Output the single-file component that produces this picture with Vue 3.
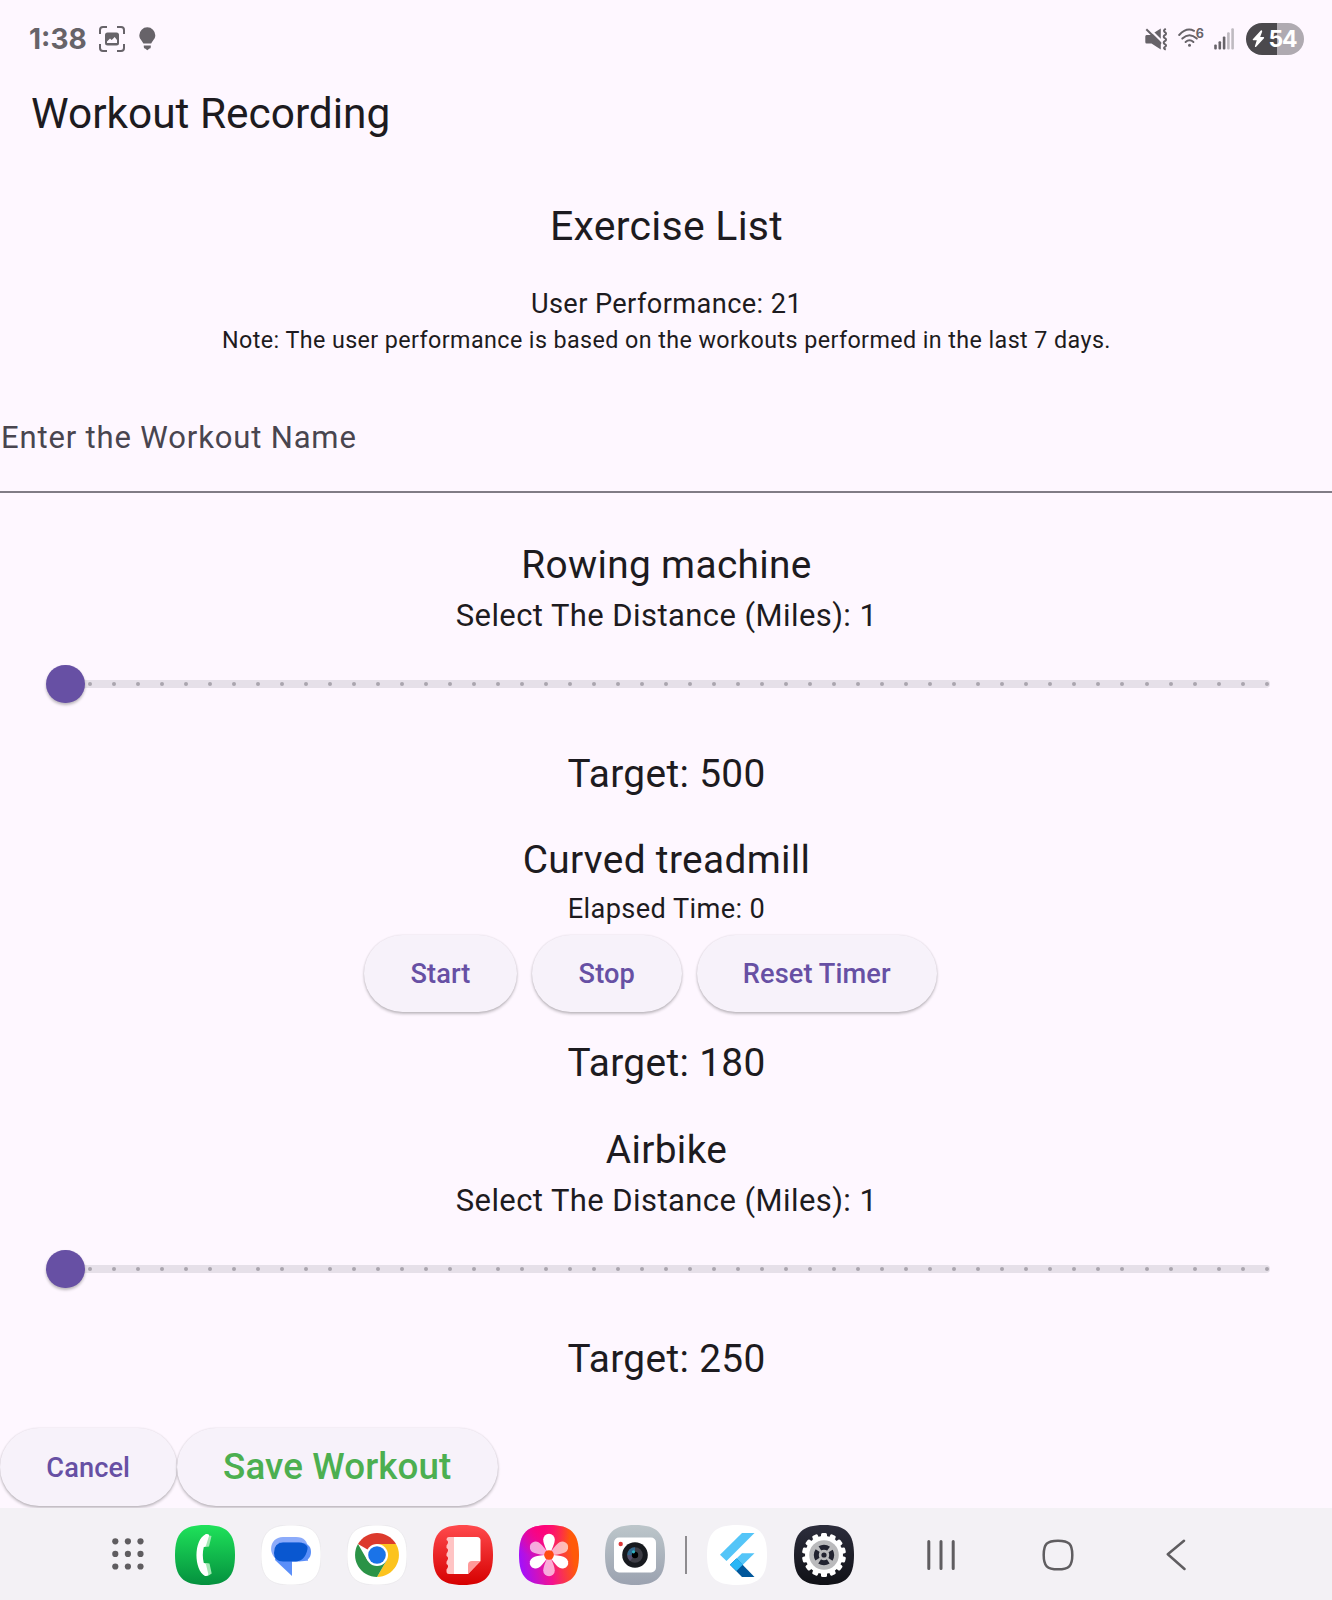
<script setup>
const ticks = Array.from({ length: 50 }, (_, i) => 24.02 * (i + 1) + 23.6)
const petals = [0, 60, 120, 180, 240, 300]
const teeth = Array.from({ length: 14 }, (_, i) => (i * 360) / 14)
const squircle = 'M30 0C52 0 60 8 60 30S52 60 30 60 0 52 0 30 8 0 30 0Z'
</script>

<template>
  <div class="screen">
    <header class="status">
      <span class="clock">1:38</span>
      <svg class="capture" width="26" height="26" viewBox="0 0 26 26">
        <path d="M1 8V4Q1 1 4 1H8M18 1H22Q25 1 25 4V8M25 18V22Q25 25 22 25H18M8 25H4Q1 25 1 22V18" fill="none" stroke="#676369" stroke-width="2" />
        <rect x="6" y="6.5" width="14" height="13" rx="2.5" fill="#676369" />
        <path d="M8 17V15.5L11 12.5L12.7 14L15.7 11L18 14V17Z" fill="#fef7ff" />
      </svg>
      <svg class="bulb" width="17" height="24" viewBox="0 0 17 24">
        <path d="M8.3 0.3A8 8 0 0 1 16.3 8.3C16.3 12 13.6 13.5 12.2 16.5H4.4C3 13.5 0.3 12 0.3 8.3A8 8 0 0 1 8.3 0.3Z" fill="#676369" />
        <path d="M4.8 18.6H11.8V20Q11.8 21.5 10.5 21.5L8.3 23.3L6.1 21.5Q4.8 21.5 4.8 20Z" fill="#676369" />
      </svg>
      <span class="grow"></span>
      <svg class="mute" width="23" height="23" viewBox="0 0 23 23">
        <path d="M1.5 7H5.5L15.8 .6V21.6L6.5 15.5H1.5Q.3 15.5 .3 14V8.5Q.3 7 1.5 7Z" fill="#676369" />
        <path d="M3.2 0L17.500 14" stroke="#fef7ff" stroke-width="2.4" />
        <path d="M1.3 1.3L16 15.8" stroke="#676369" stroke-width="2" />
        <path d="M20.8 .8Q17.800 2.500 19.800 4.200Q22.300 5.600 19.800 7.200Q17.600 8.700 19.800 10.200Q22.300 11.600 19.800 13.200Q17.600 14.700 19.800 16.200Q22.300 17.600 19.800 19Q18 20.300 20.800 21.600" fill="none" stroke="#676369" stroke-width="2" />
      </svg>
      <svg class="wifi" width="26" height="25" viewBox="0 -5 26 25">
        <g fill="none" stroke="#676369" stroke-width="2" stroke-linecap="round">
          <path d="M1.200 7Q8.500-1 16 2.800" />
          <path d="M4.300 10.600Q11.500 4 18.800 10.600" />
          <path d="M7.600 14Q11.500 10.400 15.400 14" />
        </g>
        <circle cx="11.500" cy="17.200" r="1.500" fill="#676369" />
        <text class="wifi-gen" x="17.700" y="10.300">6</text>
      </svg>
      <svg class="signal" width="21" height="22" viewBox="0 0 21 22">
        <g fill="#676369">
          <rect x=".2" y="16.6" width="2.6" height="5" rx="1" />
          <rect x="4.5" y="13.2" width="2.6" height="8.4" rx="1" />
          <rect x="8.8" y="8.6" width="2.6" height="13" rx="1" />
        </g>
        <g fill="#bfbac1">
          <rect x="13.1" y="4.2" width="2.6" height="17.4" rx="1" />
          <rect x="17.3" y=".3" width="2.6" height="21.3" rx="1" />
        </g>
      </svg>
      <div class="battery">
        <svg width="13" height="18" viewBox="0 0 13 18"><path d="M8.8 .5L.8 9.3Q.4 10.2 1.3 10.2H4.8L2.9 16.2Q3 17.5 4.2 16.8L12 8.2Q12.5 7.2 11.4 7.1H8.2L10.2 1.4Q10.1 0 8.8 .5Z" fill="#fff" /></svg>
        <span>54</span>
      </div>
    </header>

    <h1 class="title">Workout Recording</h1>

    <main>
      <h2 class="list-title">Exercise List</h2>
      <p class="performance">User Performance: 21</p>
      <p class="note">Note: The user performance is based on the workouts performed in the last 7 days.</p>
      <div class="field">Enter the Workout Name</div>

      <h3 class="exercise">Rowing machine</h3>
      <p class="select">Select The Distance (Miles): 1</p>
      <div class="slider">
        <div class="track"></div>
        <i v-for="t in ticks" :key="t" class="tick" :style="{ left: t + 'px' }"></i>
        <div class="thumb"></div>
      </div>
      <p class="target">Target: 500</p>

      <h3 class="exercise second">Curved treadmill</h3>
      <p class="elapsed">Elapsed Time: 0</p>
      <div class="timer">
        <button class="start">Start</button>
        <button class="stop">Stop</button>
        <button class="reset">Reset Timer</button>
      </div>
      <p class="target after-timer">Target: 180</p>

      <h3 class="exercise third">Airbike</h3>
      <p class="select">Select The Distance (Miles): 1</p>
      <div class="slider">
        <div class="track"></div>
        <i v-for="t in ticks" :key="t" class="tick" :style="{ left: t + 'px' }"></i>
        <div class="thumb"></div>
      </div>
      <p class="target">Target: 250</p>

      <div class="actions">
        <button class="cancel">Cancel</button>
        <button class="save">Save Workout</button>
      </div>
    </main>

    <nav class="taskbar">
      <svg class="apps" width="32" height="32" viewBox="0 0 32 32" fill="#5f5d60">
        <template v-for="r in 3" :key="r">
          <circle v-for="c in 3" :key="c" :cx="3.3 + (c - 1) * 12.6" :cy="3.3 + (r - 1) * 12.6" r="3.1" />
        </template>
      </svg>
      <div class="dock">
        <svg width="60" height="60" viewBox="0 0 60 60">
          <defs><linearGradient id="phone" x2="0" y2="1"><stop stop-color="#1fe25a" /><stop offset="1" stop-color="#04903e" /></linearGradient></defs>
          <path :d="squircle" fill="url(#phone)" />
          <path d="M30 9.500L36.500 11L34 21.500Q29 22.500 28.500 21ZM28.500 38.500Q31 37.500 34.500 38.500L36.700 48.500Q34 51 30 51Z" fill="#a3e8b4" />
          <path d="M31 9Q34.500 8.500 34 11L31 20.500Q30.300 22 28.800 22Q26.800 30 28.800 38Q30.500 37.800 31 39.500L33.300 49Q33.500 51.500 30 51C19 45 18 15 31 9Z" fill="#fff" />
        </svg>
        <svg width="60" height="60" viewBox="0 0 60 60">
          <path :d="squircle" fill="#fff" stroke="#e4e2e6" stroke-width=".6" />
          <path d="M22 12H35Q47 12 47 25V36H20C6 33 7 12 22 12Z" fill="#8cabfa" />
          <path d="M18 17.500H38Q50 17.500 50 27Q50 36.500 38 36.500H31V51L14 35Z" fill="#5b8ff9" />
          <path d="M22 17.500H38C42 17.500 45 19 46.500 22V24C45 33 39 36.500 35 36.500H22Q13 36.500 13 28Q13 17.500 22 17.500Z" fill="#0957d0" />
        </svg>
        <svg width="60" height="60" viewBox="0 0 60 60">
          <path :d="squircle" fill="#fff" stroke="#e4e2e6" stroke-width=".6" />
          <path d="M30 30L11 19A22 22 0 0 1 49 19Z" fill="#dc3a2d" />
          <path d="M49 19A22 22 0 0 1 30 52L39.500 35.500L30 19Z" fill="#fcc31e" />
          <path d="M11 19A22 22 0 0 0 30 52L39.500 35.500L30 30L20.500 35.500Z" fill="#2b9347" />
          <circle cx="30" cy="30" r="11" fill="#fff" /><circle cx="30" cy="30" r="8.800" fill="#1a73e8" />
        </svg>
        <svg width="60" height="60" viewBox="0 0 60 60">
          <defs><linearGradient id="notes" x2="0" y2="1"><stop stop-color="#ff4a4d" /><stop offset="1" stop-color="#d60000" /></linearGradient></defs>
          <path :d="squircle" fill="url(#notes)" />
          <path d="M22 12H16Q13.500 12 13.500 15Q16 16.500 14.500 19Q13 20 13.500 23Q16 24.500 14.500 27Q13 28.500 13.500 31Q16 32.500 14.500 35Q13 36.500 13.500 39Q16 40.500 14.500 43Q13 44 13.500 46.500Q13.500 49 16 49H22Z" fill="#ffc4c4" />
          <path d="M21 12H44Q47.500 12 47.500 15.500V36L35 49H21Z" fill="#fff" />
          <path d="M35 49V40Q35 36 39 36H47.500Z" fill="#ff9999" />
        </svg>
        <svg width="60" height="60" viewBox="0 0 60 60">
          <defs>
            <linearGradient id="gallery" x1="0" y1=".65" x2="1" y2=".45"><stop stop-color="#a010ff" /><stop offset=".48" stop-color="#f4128e" /><stop offset=".9" stop-color="#ff5a08" /></linearGradient>
            <radialGradient id="pink" cx=".35" cy="0" r=".55"><stop stop-color="#ff0078" /><stop offset="1" stop-color="#ff0078" stop-opacity="0" /></radialGradient>
          </defs>
          <path :d="squircle" fill="url(#gallery)" /><path :d="squircle" fill="url(#pink)" />
          <path v-for="(p, i) in petals" :key="p" d="M27.800 26Q24.200 18 24.200 14.500A5.800 5.800 0 0 1 35.800 14.500Q35.800 18 32.200 26Z" :transform="`rotate(${p} 30 30)`" fill="#fff" :opacity="i % 2 ? .65 : 1" />
          <circle cx="30" cy="30" r="4.800" fill="#ff4b12" />
        </svg>
        <svg width="60" height="60" viewBox="0 0 60 60">
          <defs><linearGradient id="camera" x2="0" y2="1"><stop stop-color="#bcc6ca" /><stop offset="1" stop-color="#9ba2b0" /></linearGradient></defs>
          <path :d="squircle" fill="url(#camera)" />
          <rect x="9" y="12.500" width="42" height="35" rx="5" fill="#fff" />
          <circle cx="15.700" cy="19" r="2.200" fill="#dc3838" />
          <circle cx="30" cy="30" r="12.800" fill="#171a1f" /><circle cx="30" cy="30" r="7.800" fill="#3d3d45" />
          <path d="M30 22.200A7.800 7.800 0 0 0 22.200 30L30 30Z" fill="#31688c" />
          <path d="M22.200 30A7.800 7.800 0 0 0 25 36L30 30Z" fill="#56506f" />
          <circle cx="30" cy="30" r="3.200" fill="#000" />
          <circle cx="28.500" cy="26.800" r="1.600" fill="#31b2c0" />
        </svg>
      </div>
      <i class="divider"></i>
      <div class="dock recent">
        <svg width="60" height="60" viewBox="0 0 60 60">
          <path :d="squircle" fill="#fff" />
          <path d="M35 8H47.500L19.500 36L13 29.700Z" fill="#54c5f8" />
          <path d="M35 28.300H47.500L29.500 46L23 39.800Z" fill="#54c5f8" />
          <path d="M35 52L23 39.800L29.500 33.500L47.500 52Z" fill="#01579b" />
          <path d="M23 39.800L29.500 33.500L35.800 39.800L29.500 46Z" fill="#29b6f6" />
        </svg>
        <svg width="60" height="60" viewBox="0 0 60 60">
          <defs><linearGradient id="gear" x2="0" y2="1"><stop stop-color="#2c2d3c" /><stop offset="1" stop-color="#101116" /></linearGradient></defs>
          <path :d="squircle" fill="url(#gear)" />
          <rect v-for="t in teeth" :key="t" x="27" y="8" width="6" height="10" rx="1.500" fill="#fff" :transform="`rotate(${t} 30 30)`" />
          <circle cx="30" cy="30" r="19" fill="#fff" /><circle cx="30" cy="30" r="14.800" fill="#bababc" />
          <circle cx="30" cy="30" r="7.700" fill="none" stroke="#222330" stroke-width="5" stroke-dasharray="9.100 2.995" stroke-dashoffset="4.550" />
          <circle cx="30" cy="30" r="5" fill="#bababc" /><circle cx="30" cy="30" r="2.600" fill="#222330" />
        </svg>
      </div>
      <svg class="recents" width="30" height="30" viewBox="0 0 30 30"><path d="M2.800 1.500V28.500M15 1.500V28.500M27.200 1.500V28.500" stroke="#5f5d60" stroke-width="3" stroke-linecap="round" /></svg>
      <svg class="home" width="32" height="32" viewBox="0 0 32 32"><path d="M16 1.700C27 1.700 30.300 5 30.300 16S27 30.300 16 30.300 1.700 27 1.700 16 5 1.700 16 1.700Z" fill="none" stroke="#5f5d60" stroke-width="2.500" /></svg>
      <svg class="back" width="20" height="32" viewBox="0 0 20 32"><path d="M18 1.800L1.800 15.300L18.500 30" fill="none" stroke="#5f5d60" stroke-width="2.500" stroke-linecap="round" stroke-linejoin="round" /></svg>
    </nav>
  </div>
</template>

<style>
body { margin: 0; background: #fef7ff; }
</style>

<style scoped>
.screen { width: 1332px; height: 1600px; display: flex; flex-direction: column; overflow: hidden; background: #fef7ff; color: #1d1b20; font-family: Roboto, sans-serif; }
h1, h2, h3, p { margin: 0; font-weight: 400; white-space: nowrap; }
main h2, main h3, main p { padding-left: 1px; }
.status { flex: none; height: 78px; display: flex; align-items: center; padding: 0 28px 0 29px; box-sizing: border-box; color: #676369; }
.clock { width: 70px; font: 700 28px/40px Inter, sans-serif; }
.bulb { margin-left: 13.500px; }
.grow { flex: 1; }
.mute { margin-right: 1px; }
.wifi { margin-left: 8.500px; margin-top: -8px; }
.wifi-gen { font: 700 12.500px Inter, sans-serif; fill: #676369; }
.signal { margin-left: 10.500px; }
.battery { width: 58px; height: 32px; margin-left: 11px; border-radius: 16px; background: linear-gradient(90deg, #4b494d 0 31px, #afaab1 31px); display: flex; align-items: center; padding-left: 6px; box-sizing: border-box; color: #fff; font: 700 23px/32px Inter, sans-serif; letter-spacing: -1.200px; }
.battery span { margin-left: 3.500px; }
.title { flex: none; height: 70px; padding: 1px 0 0 31px; box-sizing: border-box; font-size: 42.400px; line-height: 69px; }
main { display: flex; flex-direction: column; flex: 1; min-height: 0; text-align: center; }
.list-title { margin-top: 52.500px; line-height: 50px; font-size: 41px; letter-spacing: .25px; }
.performance { margin-top: 34px; font-size: 27.200px; line-height: 38px; letter-spacing: .4px; }
.note { font-size: 23.300px; line-height: 34px; letter-spacing: .41px; }
.field { height: 108px; box-sizing: border-box; margin-top: 28.500px; padding: 33px 0 0 1px; border-bottom: 2px solid #817c86; text-align: left; font-size: 31px; line-height: 40px; letter-spacing: .85px; color: #49454f; }
.exercise { margin-top: 47px; font-size: 38.800px; line-height: 50px; letter-spacing: .35px; }
.select { margin-top: 6px; font-size: 31px; line-height: 40px; letter-spacing: .42px; }
.slider { position: relative; height: 96px; margin: 0 42px; }
.track { height: 8px; margin: 44px 20px 0; width: 1208px; border-radius: 4px; background: #e6e0e9; }
.tick { position: absolute; top: 46px; width: 4px; height: 4px; margin-left: -2px; border-radius: 50%; background: #aaa5ae; }
.thumb { position: absolute; left: 4.300px; top: 28.500px; width: 38.700px; height: 38.700px; border-radius: 50%; background: #6750a4; box-shadow: 0 2px 3px #0004; }
.target { margin-top: 16.500px; font-size: 38.800px; line-height: 50px; letter-spacing: .35px; }
.second { margin-top: 36.500px; }
.elapsed { margin-top: 4px; font-size: 27.200px; line-height: 40px; letter-spacing: .38px; }
.timer { display: flex; margin: 5.500px 0 0 364px; gap: 15px; }
button { height: 77.500px; padding: 1.500px 0 0; border: 0; border-radius: 39px; background: #f7f2fa; color: #6750a4; font: 500 27.200px/76px Roboto, sans-serif; letter-spacing: .1px; box-shadow: 0 2px 3px #0000003d, 0 0 2px #0000001c; white-space: nowrap; }
.start { width: 153px; }
.stop { width: 149.500px; }
.reset { width: 240.500px; }
.after-timer { margin-top: 26px; }
.third { margin-top: 37px; }
.actions { display: flex; margin-top: 44.500px; }
.cancel { width: 176.500px; }
.save { width: 321.500px; padding-top: 1px; font-size: 36.800px; color: #4caf50; }
.taskbar { height: 92.500px; display: flex; align-items: center; box-sizing: border-box; padding: 2px 0 0 111.500px; background: #f3f1f5; flex: none; }
.dock { display: flex; gap: 26px; margin-left: 31.500px; }
.apps { margin-top: -1px; }
.divider { width: 2px; height: 38px; margin-left: 20px; background: #8d8b8f; }
.recent { margin-left: 20px; gap: 26.500px; }
.recents { margin-left: 72px; }
.home { margin-left: 86.500px; }
.back { margin-left: 91.500px; }
svg { display: block; flex: none; }
</style>
